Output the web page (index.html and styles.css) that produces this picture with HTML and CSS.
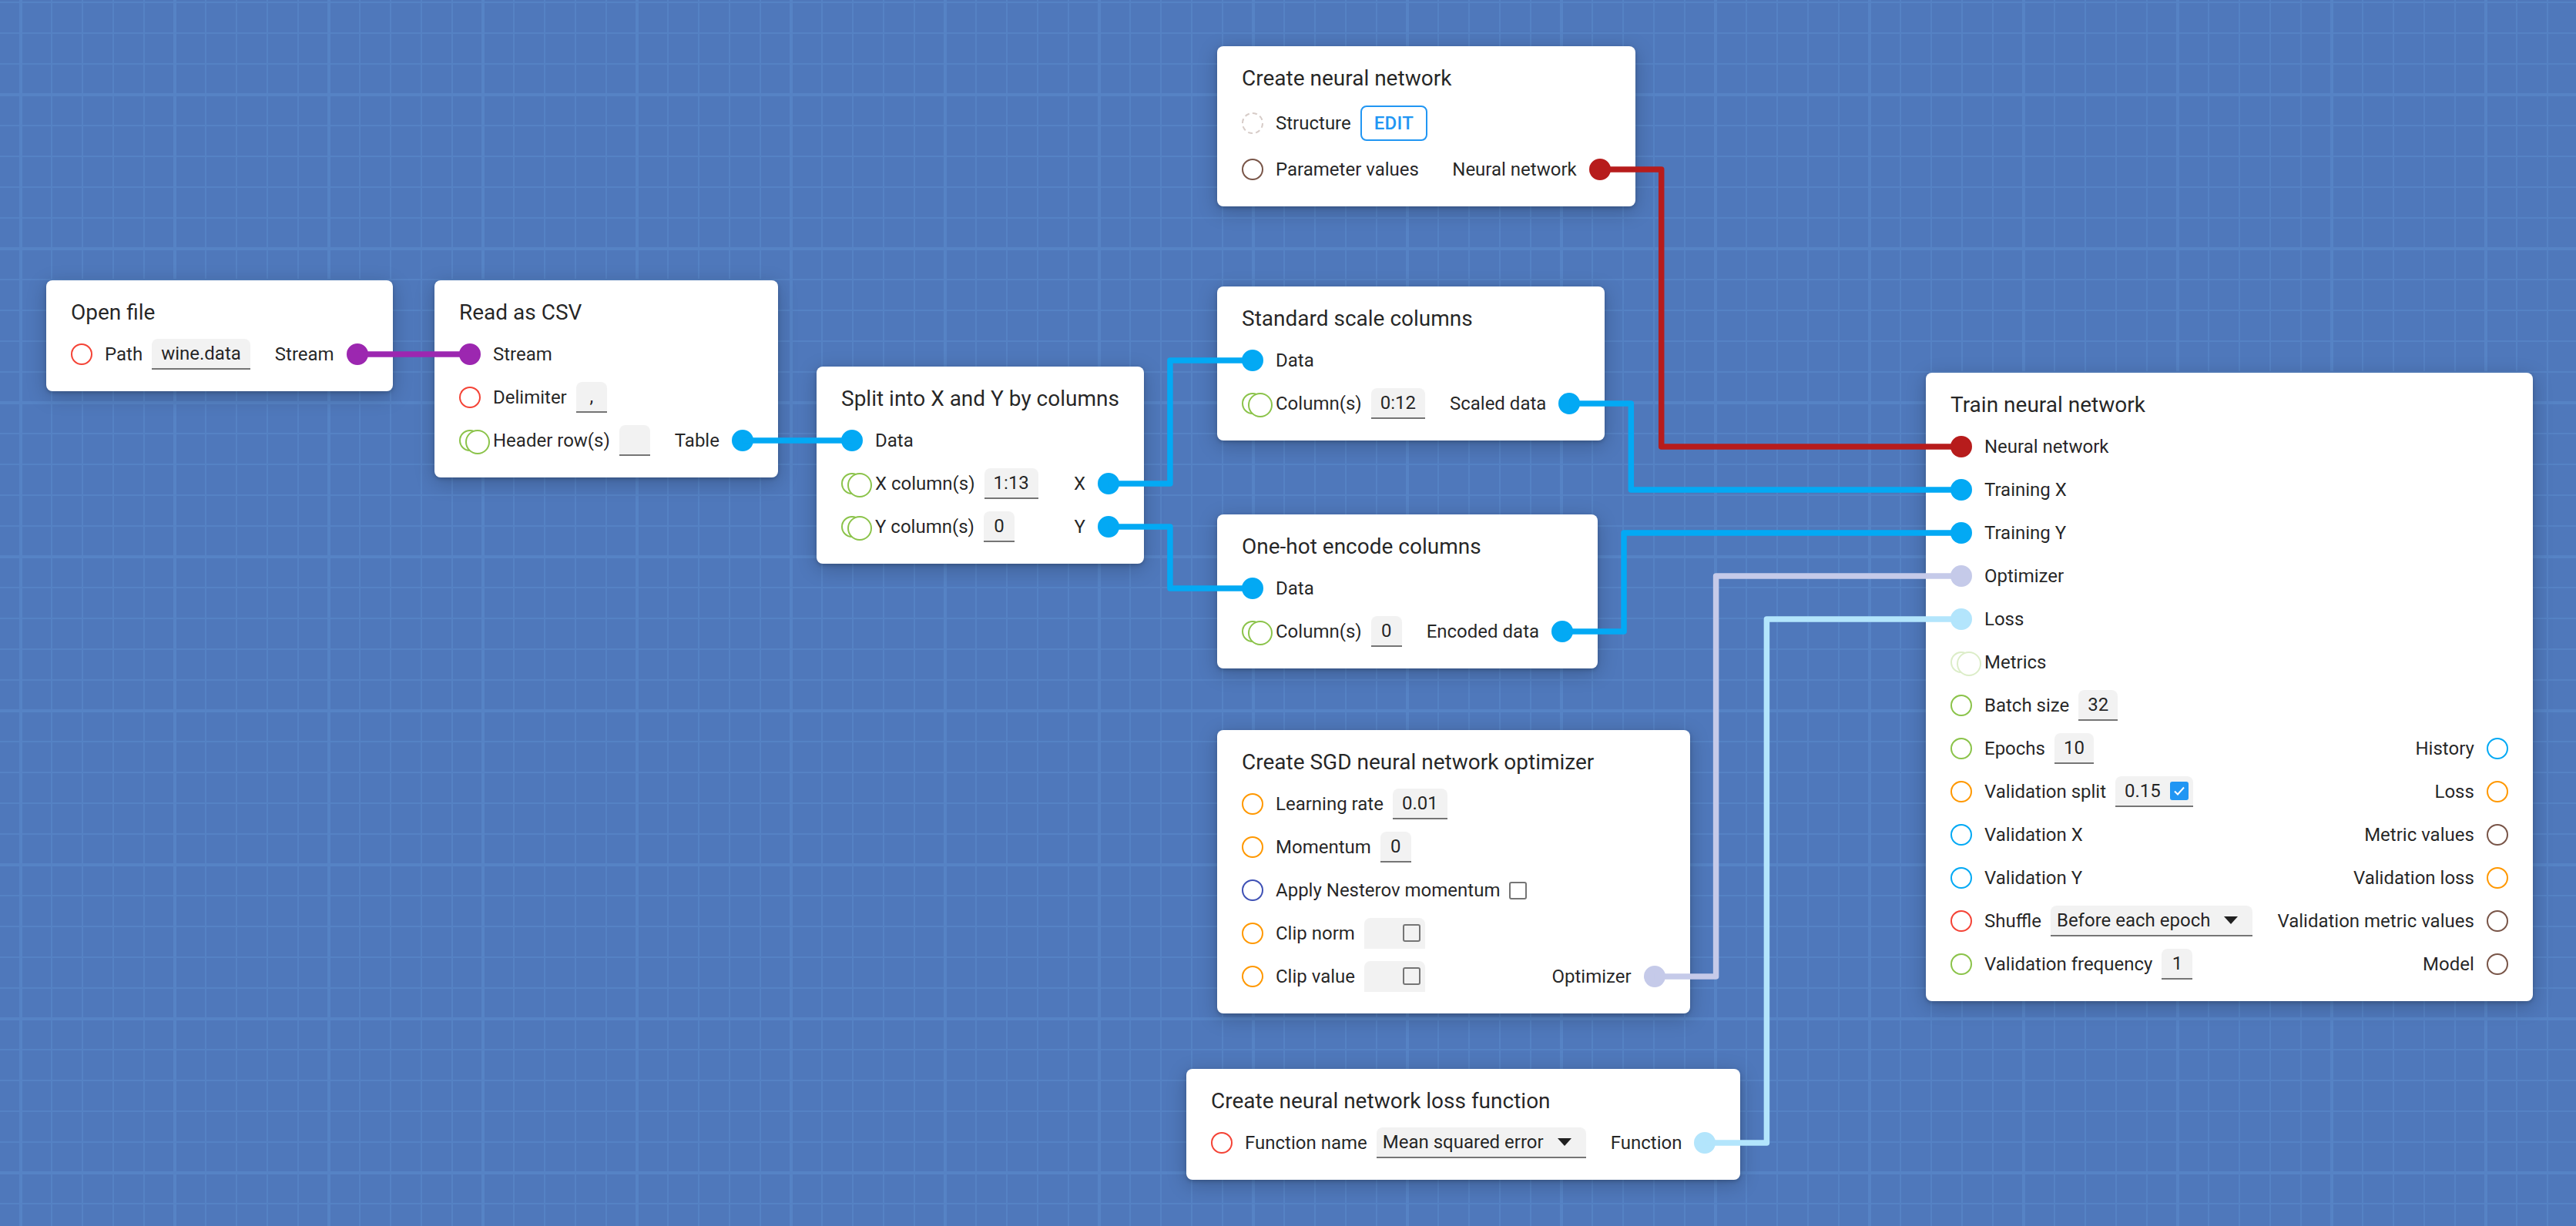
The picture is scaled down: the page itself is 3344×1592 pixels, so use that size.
FILE: index.html
```html
<!DOCTYPE html>
<html>
<head>
<meta charset="utf-8">
<title>Flow editor</title>
<link rel="stylesheet" href="styles.css">
</head>
<body>
<div class="canvas">

  <div class="node n-open">
    <div class="title">Open file</div>
    <div class="body">
      <div class="ins">
        <div class="row"><span class="port c-red"></span><span class="label">Path</span><span class="field"><span class="val">wine.data</span></span></div>
      </div>
      <div class="outs">
        <div class="row"><span class="label">Stream</span><span class="port dot c-purple" id="o-open-stream"></span></div>
      </div>
    </div>
  </div>

  <div class="node n-csv">
    <div class="title">Read as CSV</div>
    <div class="body">
      <div class="ins">
        <div class="row"><span class="port dot c-purple" id="i-csv-stream"></span><span class="label">Stream</span></div>
        <div class="row"><span class="port c-red"></span><span class="label">Delimiter</span><span class="field"><span class="val">,</span></span></div>
        <div class="row"><span class="port multi c-green"></span><span class="label">Header row(s)</span><span class="field"><span class="val"></span></span></div>
      </div>
      <div class="outs">
        <div class="row"><span class="label">Table</span><span class="port dot c-blue" id="o-csv-table"></span></div>
      </div>
    </div>
  </div>

  <div class="node n-split">
    <div class="title">Split into X and Y by columns</div>
    <div class="body">
      <div class="ins">
        <div class="row"><span class="port dot c-blue" id="i-split-data"></span><span class="label">Data</span></div>
        <div class="row"><span class="port multi c-green"></span><span class="label">X column(s)</span><span class="field"><span class="val">1:13</span></span></div>
        <div class="row"><span class="port multi c-green"></span><span class="label">Y column(s)</span><span class="field"><span class="val">0</span></span></div>
      </div>
      <div class="outs">
        <div class="row"><span class="label">X</span><span class="port dot c-blue" id="o-split-x"></span></div>
        <div class="row"><span class="label">Y</span><span class="port dot c-blue" id="o-split-y"></span></div>
      </div>
    </div>
  </div>

  <div class="node n-create">
    <div class="title">Create neural network</div>
    <div class="body">
      <div class="ins">
        <div class="row tall"><span class="port dashed c-struct"></span><span class="label">Structure</span><span class="btn">EDIT</span></div>
        <div class="row"><span class="port c-brown"></span><span class="label">Parameter values</span></div>
      </div>
      <div class="outs">
        <div class="row"><span class="label">Neural network</span><span class="port dot c-dred" id="o-create-nn"></span></div>
      </div>
    </div>
  </div>

  <div class="node n-scale">
    <div class="title">Standard scale columns</div>
    <div class="body">
      <div class="ins">
        <div class="row"><span class="port dot c-blue" id="i-scale-data"></span><span class="label">Data</span></div>
        <div class="row"><span class="port multi c-green"></span><span class="label">Column(s)</span><span class="field"><span class="val">0:12</span></span></div>
      </div>
      <div class="outs">
        <div class="row"><span class="label">Scaled data</span><span class="port dot c-blue" id="o-scale-data"></span></div>
      </div>
    </div>
  </div>

  <div class="node n-onehot">
    <div class="title">One-hot encode columns</div>
    <div class="body">
      <div class="ins">
        <div class="row"><span class="port dot c-blue" id="i-onehot-data"></span><span class="label">Data</span></div>
        <div class="row"><span class="port multi c-green"></span><span class="label">Column(s)</span><span class="field"><span class="val">0</span></span></div>
      </div>
      <div class="outs">
        <div class="row"><span class="label">Encoded data</span><span class="port dot c-blue" id="o-onehot-data"></span></div>
      </div>
    </div>
  </div>

  <div class="node n-sgd">
    <div class="title">Create SGD neural network optimizer</div>
    <div class="body">
      <div class="ins">
        <div class="row"><span class="port c-orange"></span><span class="label">Learning rate</span><span class="field"><span class="val">0.01</span></span></div>
        <div class="row"><span class="port c-orange"></span><span class="label">Momentum</span><span class="field"><span class="val">0</span></span></div>
        <div class="row"><span class="port c-indigo"></span><span class="label">Apply Nesterov momentum</span><span class="cbx"></span></div>
        <div class="row"><span class="port c-orange"></span><span class="label">Clip norm</span><span class="field chk off"><span class="val empty"></span><span class="cbx"></span></span></div>
        <div class="row"><span class="port c-orange"></span><span class="label">Clip value</span><span class="field chk off"><span class="val empty"></span><span class="cbx"></span></span></div>
      </div>
      <div class="outs">
        <div class="row"><span class="label">Optimizer</span><span class="port dot c-lav" id="o-sgd-opt"></span></div>
      </div>
    </div>
  </div>

  <div class="node n-loss">
    <div class="title">Create neural network loss function</div>
    <div class="body">
      <div class="ins">
        <div class="row"><span class="port c-red"></span><span class="label">Function name</span><span class="field select"><span class="val w-loss">Mean squared error</span><span class="arrow"></span></span></div>
      </div>
      <div class="outs">
        <div class="row"><span class="label">Function</span><span class="port dot c-sky" id="o-loss-fn"></span></div>
      </div>
    </div>
  </div>

  <div class="node n-train">
    <div class="title">Train neural network</div>
    <div class="body">
      <div class="ins">
        <div class="row"><span class="port dot c-dred" id="i-train-nn"></span><span class="label">Neural network</span></div>
        <div class="row"><span class="port dot c-blue" id="i-train-x"></span><span class="label">Training X</span></div>
        <div class="row"><span class="port dot c-blue" id="i-train-y"></span><span class="label">Training Y</span></div>
        <div class="row"><span class="port dot c-lav" id="i-train-opt"></span><span class="label">Optimizer</span></div>
        <div class="row"><span class="port dot c-sky" id="i-train-loss"></span><span class="label">Loss</span></div>
        <div class="row"><span class="port multi c-lgreen"></span><span class="label">Metrics</span></div>
        <div class="row"><span class="port c-green"></span><span class="label">Batch size</span><span class="field"><span class="val">32</span></span></div>
        <div class="row"><span class="port c-green"></span><span class="label">Epochs</span><span class="field"><span class="val">10</span></span></div>
        <div class="row"><span class="port c-orange"></span><span class="label">Validation split</span><span class="field chk"><span class="val">0.15</span><span class="cbx on"><svg viewBox="0 0 24 24" width="24" height="24"><path d="M6 12.5l4 4 8-9" fill="none" stroke="#fff" stroke-width="2"/></svg></span></span></div>
        <div class="row"><span class="port c-blue"></span><span class="label">Validation X</span></div>
        <div class="row"><span class="port c-blue"></span><span class="label">Validation Y</span></div>
        <div class="row"><span class="port c-red"></span><span class="label">Shuffle</span><span class="field select"><span class="val">Before each epoch</span><span class="arrow"></span></span></div>
        <div class="row"><span class="port c-green"></span><span class="label">Validation frequency</span><span class="field"><span class="val">1</span></span></div>
      </div>
      <div class="outs">
        <div class="row"><span class="label">History</span><span class="port c-blue"></span></div>
        <div class="row"><span class="label">Loss</span><span class="port c-orange"></span></div>
        <div class="row"><span class="label">Metric values</span><span class="port c-brown"></span></div>
        <div class="row"><span class="label">Validation loss</span><span class="port c-orange"></span></div>
        <div class="row"><span class="label">Validation metric values</span><span class="port c-brown"></span></div>
        <div class="row"><span class="label">Model</span><span class="port c-brown"></span></div>
      </div>
    </div>
  </div>

  <svg class="wires" width="3344" height="1592" viewBox="0 0 3344 1592">
    <path class="wire s-purple" data-from="o-open-stream" data-to="i-csv-stream"/>
    <path class="wire s-blue" data-from="o-csv-table" data-to="i-split-data"/>
    <path class="wire s-blue" data-from="o-split-x" data-to="i-scale-data"/>
    <path class="wire s-blue" data-from="o-split-y" data-to="i-onehot-data"/>
    <path class="wire s-dred" data-from="o-create-nn" data-to="i-train-nn"/>
    <path class="wire s-blue" data-from="o-scale-data" data-to="i-train-x"/>
    <path class="wire s-blue" data-from="o-onehot-data" data-to="i-train-y"/>
    <path class="wire s-lav" data-from="o-sgd-opt" data-to="i-train-opt"/>
    <path class="wire s-sky" data-from="o-loss-fn" data-to="i-train-loss"/>
  </svg>
</div>
<script src="wires.js"></script>
</body>
</html>
```

FILE: styles.css
```css
* { box-sizing: border-box; }
html, body { margin: 0; padding: 0; }
body {
  font-family: Roboto, "Noto Sans", "Liberation Sans", sans-serif;
  color: rgba(0, 0, 0, 0.87);
  overflow: hidden;
}
.canvas {
  position: relative;
  width: 3344px;
  height: 1592px;
  overflow: hidden;
  background-color: #4f78bb;
  background-image:
    linear-gradient(to right, #5683c5 4px, transparent 4px),
    linear-gradient(to bottom, #5683c5 4px, transparent 4px),
    linear-gradient(to right, #5582c4 2px, transparent 2px),
    linear-gradient(to bottom, #5582c4 2px, transparent 2px);
  background-size: 200px 200px, 200px 200px, 40px 40px, 40px 40px;
  background-position: 25px 0, 0 121px, 26px 0, 0 2px;
}

/* nodes */
.node {
  position: absolute;
  background: #fff;
  border-radius: 8px;
  box-shadow: 0 2px 5px rgba(0, 0, 0, 0.18), 0 6px 26px rgba(0, 0, 0, 0.22);
  padding: 24px 32px 20px;
}
.n-open   { left: 60px;   top: 364px; }
.n-csv    { left: 564px;  top: 364px; }
.n-split  { left: 1060px; top: 476px; }
.n-create { left: 1580px; top: 60px; }
.n-scale  { left: 1580px; top: 372px; }
.n-onehot { left: 1580px; top: 668px; }
.n-sgd    { left: 1580px; top: 948px; }
.n-train  { left: 2500px; top: 484px; }
.n-loss   { left: 1540px; top: 1388px; }

.title {
  font-size: 28px;
  line-height: 36px;
  margin-bottom: 8px;
  white-space: nowrap;
}
.body {
  display: flex;
  justify-content: space-between;
  gap: 32px;
}
.ins, .outs { display: flex; flex-direction: column; }
.outs { justify-content: flex-end; align-items: flex-end; }
.row {
  height: 56px;
  display: flex;
  align-items: center;
  font-size: 24px;
  white-space: nowrap;
}
.row.tall { height: 64px; }

/* ports */
.port {
  flex: none;
  width: 28px;
  height: 28px;
  border-radius: 50%;
  border: 2px solid currentColor;
  background: #fff;
}
.ins .port { margin-right: 16px; }
.outs .port { margin-left: 16px; }
.port.dot { background: currentColor; }
.port.dashed { border-style: dashed; }
.port.multi { position: relative; }
.port.multi::after {
  content: "";
  position: absolute;
  left: 6px;
  top: -2px;
  width: 28px;
  height: 28px;
  border-radius: 50%;
  border: 2px solid currentColor;
  background: #fff;
}

.c-red    { color: #f44336; }
.c-green  { color: #8bc34a; }
.c-lgreen { color: #dcedc8; }
.c-orange { color: #ff9800; }
.c-indigo { color: #3f51b5; }
.c-blue   { color: #03a9f4; }
.c-brown  { color: #795548; }
.c-purple { color: #9c27b0; }
.c-dred   { color: #b71c1c; }
.c-lav    { color: #c5cae9; }
.c-sky    { color: #b3e5fc; }
.c-struct { color: #d7ccc8; }

/* fields */
.field {
  display: inline-flex;
  align-items: center;
  justify-content: center;
  height: 40px;
  min-width: 40px;
  margin-left: 12px;
  padding: 0 12px;
  background: #f2f2f2;
  border-bottom: 2px solid #757575;
  border-radius: 8px 8px 0 0;
  color: rgba(0, 0, 0, 0.87);
}
.field.chk { padding: 0 6px 0 12px; }
.field.chk .cbx { margin-left: 12px; }
.field.off { border-bottom-color: transparent; }
.val.empty { display: inline-block; width: 26px; }
.field.select { padding: 0 19px 0 8px; justify-content: flex-start; }
.val.w-loss { display: inline-block; min-width: 209px; }
.arrow {
  margin-left: 18px;
  width: 0;
  height: 0;
  border-left: 9.5px solid transparent;
  border-right: 9.5px solid transparent;
  border-top: 10px solid rgba(0, 0, 0, 0.87);
}
.cbx {
  flex: none;
  display: inline-block;
  width: 23px;
  height: 23px;
  border: 2px solid #757575;
  border-radius: 3px;
  margin-left: 12px;
  background: transparent;
}
.cbx.on {
  width: 24px;
  height: 24px;
  border: none;
  background: #2196f3;
}
.cbx.on svg { display: block; }

.btn {
  margin-left: 12px;
  height: 46px;
  display: inline-flex;
  align-items: center;
  padding: 0 16px;
  border: 2px solid #2196f3;
  border-radius: 8px;
  color: #2196f3;
  font-weight: 500;
  font-size: 24px;
  letter-spacing: 0.3px;
}

/* wires */
.wires {
  position: absolute;
  left: 0;
  top: 0;
  pointer-events: none;
}
.wire { fill: none; stroke-width: 7.5; stroke-linejoin: round; }
.s-purple { stroke: #9c27b0; }
.s-blue   { stroke: #03a9f4; }
.s-dred   { stroke: #b71c1c; }
.s-lav    { stroke: #c5cae9; }
.s-sky    { stroke: #b3e5fc; }
```

FILE: wires.js
```js
(function () {
  function center(el) {
    var r = el.getBoundingClientRect();
    return [r.left + r.width / 2, r.top + r.height / 2];
  }
  function draw() {
    var wires = document.querySelectorAll('.wire');
    for (var i = 0; i < wires.length; i++) {
      var p = wires[i];
      var a = document.getElementById(p.getAttribute('data-from'));
      var b = document.getElementById(p.getAttribute('data-to'));
      if (!a || !b) continue;
      var s = center(a), e = center(b);
      var mx = s[0] + 80;
      p.setAttribute('d', 'M' + s[0] + ' ' + s[1] + ' H' + mx + ' V' + e[1] + ' H' + e[0]);
    }
  }
  draw();
  window.addEventListener('load', draw);
})();
```
